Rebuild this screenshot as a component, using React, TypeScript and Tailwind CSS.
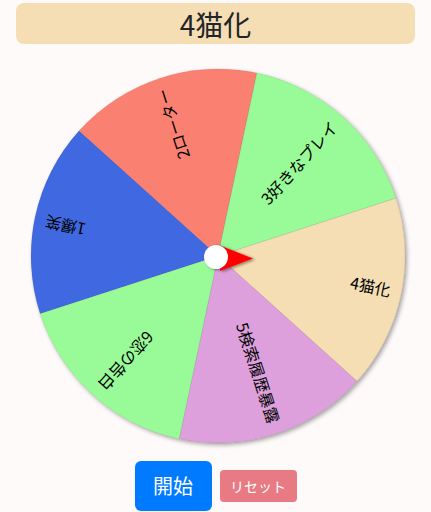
import React from 'react';

type Segment = { label: string; color: string; mid: number };

const segments: Segment[] = [
    { label: '1爆笑', color: '#4169e1', mid: 192 },
    { label: '2ローター', color: '#fa8072', mid: 252 },
    { label: '3好きなプレイ', color: '#98fb98', mid: 312 },
    { label: '4猫化', color: '#f5deb3', mid: 12 },
    { label: '5検索履歴暴露', color: '#dda0dd', mid: 72 },
    { label: '6恋の告白', color: '#98fb98', mid: 132 },
];

const cx = 218;
const cy = 204;
const r = 187;

const pt = (deg: number, rr: number) => {
    const t = (deg * Math.PI) / 180;
    return [cx + rr * Math.cos(t), cy + rr * Math.sin(t)];
};

const Wheel: React.FC = () => (
    <svg width={431} height={400} className="block">
        <defs>
            <filter id="wheelShadow" x="-10%" y="-10%" width="120%" height="120%">
                <feDropShadow dx="2" dy="2" stdDeviation="2" floodColor="#000" floodOpacity="0.35" />
            </filter>
            <filter id="knobShadow" x="-50%" y="-50%" width="200%" height="200%">
                <feDropShadow dx="2" dy="1" stdDeviation="1.5" floodColor="#000" floodOpacity="0.45" />
            </filter>
        </defs>
        <g filter="url(#wheelShadow)">
            {segments.map((s) => {
                const [x1, y1] = pt(s.mid - 30, r);
                const [x2, y2] = pt(s.mid + 30, r);
                return (
                    <path
                        key={s.label}
                        d={`M ${cx} ${cy} L ${x1} ${y1} A ${r} ${r} 0 0 1 ${x2} ${y2} Z`}
                        fill={s.color}
                        stroke="rgba(0,0,0,0.12)"
                        strokeWidth={0.6}
                    />
                );
            })}
        </g>
        {segments.map((s) => (
            <text
                key={s.label + '-t'}
                x={cx + r - 11}
                y={cy}
                transform={`rotate(${s.mid} ${cx} ${cy})`}
                textAnchor="end"
                dominantBaseline="middle"
                fontSize={16}
                fill="#000"
                style={{ fontFamily: '"Noto Sans CJK JP", "Noto Sans", sans-serif' }}
            >
                {s.label}
            </text>
        ))}
        <g filter="url(#knobShadow)">
            <polygon points="220,193.5 253,206.5 220,219" fill="#ff0000" />
            <circle cx={216} cy={205} r={12} fill="#ffffff" />
        </g>
    </svg>
);

const App: React.FC = () => {
    return (
        <div className="min-h-screen bg-[#fffafa] pt-[3px] font-['Noto_Sans_CJK_JP','Noto_Sans',sans-serif]">
            <div className="mx-4 h-[41px] flex items-center justify-center rounded-lg bg-[#f5deb3]">
                <h1 className="text-[28px] leading-none text-[#212529]">4猫化</h1>
            </div>
            <div className="mt-2">
                <Wheel />
            </div>
            <div className="mt-[9px] flex items-center justify-center gap-2">
                <button className="w-[77px] h-[50px] rounded-md bg-[#007bff] text-white text-xl">
                    開始
                </button>
                <button className="w-[77px] h-[32px] rounded bg-[#e87a84] text-white text-sm">
                    リセット
                </button>
            </div>
        </div>
    );
};

export default App;
